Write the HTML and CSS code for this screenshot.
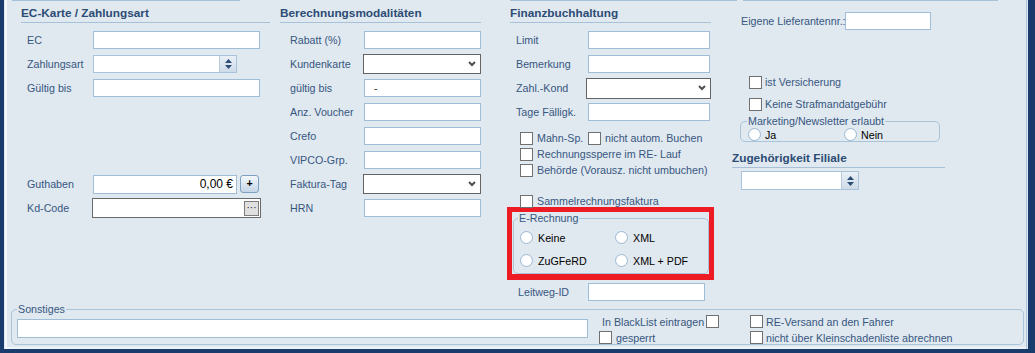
FILE: index.html
```html
<!DOCTYPE html>
<html>
    <head>
        <meta charset="utf-8">
        <title>Kunde - Zahlung</title>
        <link rel="stylesheet" href="styles.css">
    </head>
    <body>
        <div class="window">
            <div class="toplines"><span class="tl-1"></span><span class="tl-2"></span><span class="tl-3"></span></div>
            <div class="columns">
                <!-- EC / Zahlungsart -->
                <div class="col col-ec">
                    <h2 class="head">EC-Karte / Zahlungsart</h2>
                    <div class="row"><label>EC</label><span class="field"></span></div>
                    <div class="row"><label>Zahlungsart</label>
                        <span class="spin spin-pay"><span class="spin-btn">
                            <svg width="7" height="4" viewBox="0 0 7 4"><path d="M0 4 L3.5 0 L7 4 Z" fill="#2d4d75"/></svg>
                            <svg width="7" height="4" viewBox="0 0 7 4"><path d="M0 0 L3.5 4 L7 0 Z" fill="#2d4d75"/></svg>
                        </span></span>
                    </div>
                    <div class="row"><label>Gültig bis</label><span class="field"></span></div>
                    <div class="gap-3"></div>
                    <div class="row"><label>Guthaben</label><span class="field money">0,00 €</span><span class="plus">+</span></div>
                    <div class="row"><label>Kd-Code</label><span class="lookup"><span class="dots">···</span></span></div>
                </div>

                <!-- Berechnung -->
                <div class="col col-calc">
                    <h2 class="head">Berechnungsmodalitäten</h2>
                    <div class="row"><label>Rabatt (%)</label><span class="field"></span></div>
                    <div class="row"><label>Kundenkarte</label><span class="select"><svg width="8" height="6" viewBox="0 0 8 6"><path d="M1 1 L4 4 L7 1" fill="none" stroke="#4f4f4f" stroke-width="2"/></svg></span></div>
                    <div class="row"><label>gültig bis</label><span class="field date">-</span></div>
                    <div class="row"><label>Anz. Voucher</label><span class="field"></span></div>
                    <div class="row"><label>Crefo</label><span class="field"></span></div>
                    <div class="row"><label>VIPCO-Grp.</label><span class="field"></span></div>
                    <div class="row"><label>Faktura-Tag</label><span class="select"><svg width="8" height="6" viewBox="0 0 8 6"><path d="M1 1 L4 4 L7 1" fill="none" stroke="#4f4f4f" stroke-width="2"/></svg></span></div>
                    <div class="row"><label>HRN</label><span class="field"></span></div>
                </div>

                <!-- Finanzbuchhaltung -->
                <div class="col col-fibu">
                    <h2 class="head">Finanzbuchhaltung</h2>
                    <div class="row"><label>Limit</label><span class="field"></span></div>
                    <div class="row"><label>Bemerkung</label><span class="field"></span></div>
                    <div class="row"><label>Zahl.-Kond</label><span class="select"><svg width="8" height="6" viewBox="0 0 8 6"><path d="M1 1 L4 4 L7 1" fill="none" stroke="#4f4f4f" stroke-width="2"/></svg></span></div>
                    <div class="row"><label>Tage Fälligk.</label><span class="field"></span></div>
                    <div class="checks">
                        <div class="check"><span class="box"></span><span class="mahn">Mahn-Sp.</span><span class="box"></span>nicht autom. Buchen</div>
                        <div class="check"><span class="box"></span>Rechnungssperre im RE- Lauf</div>
                        <div class="check"><span class="box"></span>Behörde (Vorausz. nicht umbuchen)</div>
                    </div>
                    <div class="check sammel"><span class="box"></span>Sammelrechnungsfaktura</div>
                    <div class="mark">
                        <fieldset class="erech">
                            <legend>E-Rechnung</legend>
                            <div class="radios">
                                <span class="opt"><span class="radio"></span>Keine</span>
                                <span class="opt"><span class="radio"></span>XML</span>
                                <span class="opt"><span class="radio"></span>ZuGFeRD</span>
                                <span class="opt"><span class="radio"></span>XML + PDF</span>
                            </div>
                        </fieldset>
                    </div>
                    <div class="row leitweg"><label>Leitweg-ID</label><span class="field"></span></div>
                </div>

                <!-- Sonstiges rechts -->
                <div class="col col-misc">
                    <div class="supplier"><label>Eigene Lieferantennr.:</label><span class="field"></span></div>
                    <div class="check first"><span class="box"></span>ist Versicherung</div>
                    <div class="check"><span class="box"></span>Keine Strafmandatgebühr</div>
                    <fieldset class="mkt">
                        <legend>Marketing/Newsletter erlaubt</legend>
                        <div class="radios">
                            <span class="opt"><span class="radio"></span>Ja</span>
                            <span class="opt"><span class="radio"></span>Nein</span>
                        </div>
                    </fieldset>
                    <h2 class="head">Zugehörigkeit Filiale</h2>
                    <span class="spin spin-branch"><span class="spin-btn">
                        <svg width="7" height="4" viewBox="0 0 7 4"><path d="M0 4 L3.5 0 L7 4 Z" fill="#2d4d75"/></svg>
                        <svg width="7" height="4" viewBox="0 0 7 4"><path d="M0 0 L3.5 4 L7 0 Z" fill="#2d4d75"/></svg>
                    </span></span>
                </div>
            </div>

            <fieldset class="other">
                <legend>Sonstiges</legend>
                <div class="other-body">
                    <span class="field note"></span>
                    <div class="flags">
                        <div class="flag black">In BlackList eintragen<span class="box"></span></div>
                        <div class="flag"><span class="box"></span>gesperrt</div>
                    </div>
                    <div class="flags right">
                        <div class="flag"><span class="box"></span>RE-Versand an den Fahrer</div>
                        <div class="flag"><span class="box"></span>nicht über Kleinschadenliste abrechnen</div>
                    </div>
                </div>
            </fieldset>
        </div>
    </body>
</html>
```

FILE: styles.css
```css
html, body {
    margin: 0;
    height: 100%;
}
body {
    background: #e0e8f0;
    font-family: "Liberation Sans", Arial, sans-serif;
    font-size: 10.7px;
    color: #37577f;
}
.window {
    height: 353px;
    box-sizing: border-box;
    border-left: 4px solid #1a3c6d;
    border-right: 7px solid #1a3c6d;
    border-bottom: 4px solid #1a3c6d;
    box-shadow: inset 1px 0 0 #e0e8f0, inset 3px 0 0 #f5f8fb,
                inset -1px 0 0 #e0e8f0, inset -2px 0 0 #a9c3da,
                inset 0 -2px 0 #eef3f8;
    overflow: hidden;
}
.toplines {
    display: flex;
    height: 1px;
}
.toplines span {
    background: #a7c1d8;
}
.tl-1 { margin-left: 8px; width: 228px; }
.tl-2 { margin-left: 270px; width: 227px; }
.tl-3 { margin-left: 6px; width: 255px; }

.columns {
    display: flex;
    align-items: flex-start;
    height: 302px;
}
.col-ec { margin-left: 17px; width: 249px; }
.col-calc { margin-left: 10px; width: 201px; }
.col-fibu { margin-left: 29px; width: 201px; }
.col-misc { margin-left: 21px; width: 213px; }

.head {
    margin: 3px 0 5px;
    height: 18px;
    line-height: 18px;
    font-size: 11.8px;
    font-weight: bold;
    color: #2c4c74;
    border-bottom: 1px solid #a7c1d8;
}
.row {
    display: flex;
    align-items: center;
    height: 24px;
}
.row label {
    flex: none;
    box-sizing: border-box;
    white-space: nowrap;
}
.col-ec .row label { width: 72px; padding-left: 6px; }
.col-calc .row label { width: 84px; padding-left: 10px; }
.col-fibu .row label { width: 78px; padding-left: 6px; }

.field {
    display: block;
    box-sizing: border-box;
    height: 18px;
    background: #fff;
    border: 1px solid #9fbdd7;
}
.col-ec .field { width: 167px; }
.col-calc .field { width: 118px; }
.col-fibu .field { width: 122px; }
.date {
    padding-left: 9px;
    line-height: 16px;
    color: #333;
}
.money.field {
    width: 144px;
    height: 19px;
    text-align: right;
    padding-right: 3px;
    line-height: 17px;
    color: #000;
    font-size: 12px;
}
.plus {
    margin-left: 3px;
    width: 19px;
    height: 18px;
    box-sizing: border-box;
    border: 1px solid #7fa0c0;
    border-radius: 3px;
    background: linear-gradient(#f3f7fb, #c4d6e8);
    color: #000;
    font-weight: bold;
    text-align: center;
    line-height: 15px;
}
.lookup {
    display: flex;
    justify-content: flex-end;
    align-items: center;
    box-sizing: border-box;
    width: 169px;
    height: 20px;
    margin-left: -1px;
    padding-right: 1px;
    background: #fff;
    border: 1px solid #6a6a6a;
}
.dots {
    width: 15px;
    height: 15px;
    box-sizing: border-box;
    background: #e0e0e0;
    border: 1px solid #7c7c7c;
    color: #222;
    text-align: center;
    line-height: 11px;
    font-size: 10px;
}
.gap-3 { height: 72px; }

.select {
    display: flex;
    justify-content: flex-end;
    align-items: center;
    box-sizing: border-box;
    height: 20px;
    padding-right: 4px;
    background: #fff;
    border: 1px solid #646464;
}
.col-calc .select { width: 121px; margin-left: -1px; }
.col-fibu .select { width: 125px; margin-left: -2px; height: 21px; }

.spin {
    display: flex;
    box-sizing: border-box;
    background: #fff;
    border: 1px solid #a9c3da;
}
.spin-btn {
    margin-left: auto;
    width: 16px;
    display: flex;
    flex-direction: column;
    align-items: center;
    justify-content: center;
    gap: 2px;
    background: linear-gradient(#eaf0f6, #cddbe8);
    border-left: 1px solid #b7cbdd;
}
.spin-btn svg { display: block; }
.spin-pay { width: 144px; height: 18px; }
.spin-branch { width: 118px; height: 19px; margin-left: 9px; margin-top: 3px; }

/* checkboxes and radios */
.box {
    flex: none;
    width: 13px;
    height: 13px;
    box-sizing: border-box;
    background: #fff;
    border: 1px solid #707070;
}
.check {
    display: flex;
    align-items: center;
    height: 16px;
    white-space: nowrap;
}
.check .box { margin-right: 4px; }
.col-fibu .check { padding-left: 10px; }
.checks { margin-top: 6px; }
.mahn { width: 51px; }
.sammel { margin-top: 15px; }

.radio {
    flex: none;
    width: 13px;
    height: 13px;
    box-sizing: border-box;
    border-radius: 50%;
    border: 1px solid #9fbad4;
    background: radial-gradient(circle, #fff 55%, #e6eef6);
}
.opt {
    display: flex;
    align-items: center;
    color: #000;
}
.opt .radio { margin-right: 5px; }

fieldset {
    margin: 0;
    padding: 0;
    min-width: 0;
    border: 1px solid #a9c3d9;
    border-radius: 5px;
}
legend {
    padding: 0 1px;
    line-height: 13px;
}

.mark {
    box-sizing: border-box;
    width: 207px;
    height: 73px;
    margin: -2px 0 0 -3px;
    border: 5px solid #ed1c24;
    border-bottom-width: 6px;
}
.erech {
    margin-left: 1px;
    height: 62px;
    box-sizing: border-box;
}
.erech legend { margin-left: 4px; }
.erech .radios {
    display: grid;
    grid-template-columns: 95px 95px;
    grid-auto-rows: 23px;
    padding: 1px 0 0 6px;
}
.leitweg {
    margin-top: 1px;
    height: 22px;
}
.col-fibu .leitweg label { padding-left: 8px; }
.col-fibu .leitweg .field { width: 117px; }

.supplier {
    display: flex;
    align-items: center;
    height: 24px;
    margin: 8px 0 0 9px;
}
.supplier label { width: 104px; flex: none; white-space: nowrap; }
.supplier .field { width: 86px; }
.col-misc .check {
    height: 22px;
    padding-left: 17px;
}
.col-misc .check .box { margin-right: 3px; }
.col-misc .check.first { margin-top: 38px; }

.mkt {
    margin-left: 8px;
    width: 200px;
    box-sizing: border-box;
}
.mkt legend { margin-left: 6px; }
.mkt .radios {
    display: grid;
    grid-template-columns: 96px 96px;
    grid-auto-rows: 13px;
    padding-left: 7px;
}
.mkt .opt .radio { margin-right: 4px; }
.col-misc .head { margin: 7px 0 0; }

/* Sonstiges */
.other {
    margin-left: 7px;
    width: 1013px;
    box-sizing: border-box;
}
.other legend {
    margin-left: 5px;
    line-height: 12px;
}
.other-body {
    display: flex;
    align-items: flex-start;
    height: 29px;
    padding-left: 5px;
}
.note.field {
    width: 571px;
    height: 19px;
    margin-top: 4px;
}
.flags {
    display: flex;
    flex-direction: column;
    gap: 3px;
    margin-left: 11px;
    width: 151px;
}
.flags.right { margin-left: 0; }
.flag {
    display: flex;
    align-items: center;
    height: 13px;
    white-space: nowrap;
}
.flag .box { margin-right: 4px; }
.flag.black { padding-left: 3px; }
.flag.black .box { margin: 0 0 0 2px; }
.right .flag .box { margin-right: 3px; }
```
